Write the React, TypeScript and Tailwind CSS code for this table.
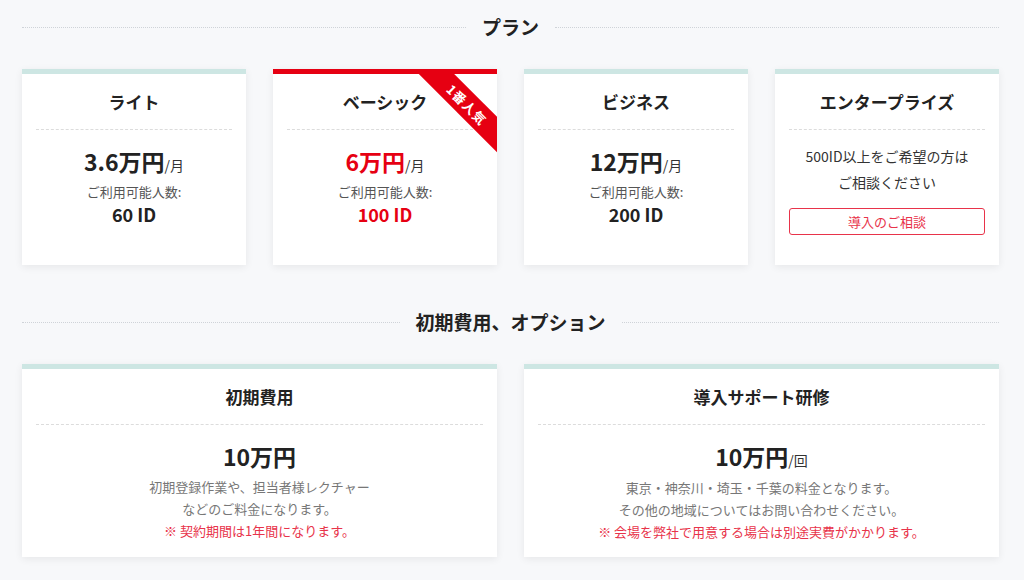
import React from "react";

const font = { fontFamily: "'Noto Sans CJK JP', 'Noto Sans', sans-serif" };

function SectionHeading({ title }: { title: string }) {
  return (
    <div className="flex items-center gap-[14px] h-[24px]">
      <div className="flex-1 border-t border-dotted border-[#cfd3d8]" />
      <h2 className="text-[19px] leading-[24px] font-bold text-[#222] px-[2px]">{title}</h2>
      <div className="flex-1 border-t border-dotted border-[#cfd3d8]" />
    </div>
  );
}

function Divider() {
  return <div className="mx-[14px] border-t border-dashed border-[#dcdcdc]" />;
}

function PlanCard({
  name,
  price,
  ids,
  featured,
}: {
  name: string;
  price: string;
  ids: string;
  featured?: boolean;
}) {
  return (
    <div
      className={`relative overflow-hidden bg-white h-[196px] border-t-[5px] shadow-[0_2px_8px_rgba(0,0,0,0.07)] ${
        featured ? "border-[#e60012]" : "border-[#cde6e3]"
      }`}
    >
      {featured && (
        <div className="absolute left-[134px] top-[18px] w-[120px] h-[25px] bg-[#e60012] rotate-45 flex items-center justify-center">
          <span className="text-white text-[13px] font-bold leading-none tracking-[1px]">1番人気</span>
        </div>
      )}
      <div className="pt-[16px] pb-[15px] text-center text-[17px] leading-[24px] font-bold text-[#222]">{name}</div>
      <Divider />
      <div className="pt-[16px] text-center">
        <div className="leading-[30px]">
          <span className={`text-[23px] font-bold ${featured ? "text-[#e60012]" : "text-[#222]"}`}>{price}</span>
          <span className="text-[14px] text-[#333]">/月</span>
        </div>
        <div className="mt-[3px] text-[13px] leading-[18px] text-[#555]">ご利用可能人数:</div>
        <div
          className={`mt-[1px] text-[18px] leading-[24px] font-bold ${featured ? "text-[#e60012]" : "text-[#222]"}`}
        >
          {ids}
        </div>
      </div>
    </div>
  );
}

function EnterpriseCard() {
  return (
    <div className="relative bg-white h-[196px] border-t-[5px] border-[#cde6e3] shadow-[0_2px_8px_rgba(0,0,0,0.07)]">
      <div className="pt-[16px] pb-[15px] text-center text-[17px] leading-[24px] font-bold text-[#222]">
        エンタープライズ
      </div>
      <Divider />
      <div className="pt-[13px] text-center text-[14px] leading-[26px] text-[#333]">
        <div>500ID以上をご希望の方は</div>
        <div>ご相談ください</div>
      </div>
      <div className="mx-[14px] mt-[13px] h-[27px] border border-[#e8334a] rounded-[3px] flex items-center justify-center text-[13px] text-[#e8334a]">
        導入のご相談
      </div>
    </div>
  );
}

function OptionCard({
  title,
  price,
  unit,
  lines,
  note,
}: {
  title: string;
  price: string;
  unit?: string;
  lines: string[];
  note: string;
}) {
  return (
    <div className="bg-white h-[193px] border-t-[5px] border-[#cde6e3] shadow-[0_2px_8px_rgba(0,0,0,0.07)]">
      <div className="pt-[16px] pb-[15px] text-center text-[17px] leading-[24px] font-bold text-[#222]">{title}</div>
      <Divider />
      <div className="pt-[16px] text-center">
        <div className="leading-[30px]">
          <span className="text-[23px] font-bold text-[#222]">{price}</span>
          {unit && <span className="text-[14px] text-[#333]">{unit}</span>}
        </div>
        <div className="mt-[2px] text-[13px] leading-[22px] text-[#777]">
          {lines.map((l) => (
            <div key={l}>{l}</div>
          ))}
          <div className="text-[#e8334a]">{note}</div>
        </div>
      </div>
    </div>
  );
}

export default function App() {
  return (
    <div className="w-[1024px] h-[580px] bg-[#f7f8fa] pl-[22px] pr-[25px] pt-[15px] overflow-hidden" style={font}>
      <SectionHeading title="プラン" />
      <div className="mt-[30px] grid grid-cols-4 gap-[27px]">
        <PlanCard name="ライト" price="3.6万円" ids="60 ID" />
        <PlanCard name="ベーシック" price="6万円" ids="100 ID" featured />
        <PlanCard name="ビジネス" price="12万円" ids="200 ID" />
        <EnterpriseCard />
      </div>
      <div className="mt-[45px]">
        <SectionHeading title="初期費用、オプション" />
      </div>
      <div className="mt-[30px] grid grid-cols-2 gap-[27px]">
        <OptionCard
          title="初期費用"
          price="10万円"
          lines={["初期登録作業や、担当者様レクチャー", "などのご料金になります。"]}
          note="※ 契約期間は1年間になります。"
        />
        <OptionCard
          title="導入サポート研修"
          price="10万円"
          unit="/回"
          lines={["東京・神奈川・埼玉・千葉の料金となります。", "その他の地域についてはお問い合わせください。"]}
          note="※ 会場を弊社で用意する場合は別途実費がかかります。"
        />
      </div>
    </div>
  );
}
